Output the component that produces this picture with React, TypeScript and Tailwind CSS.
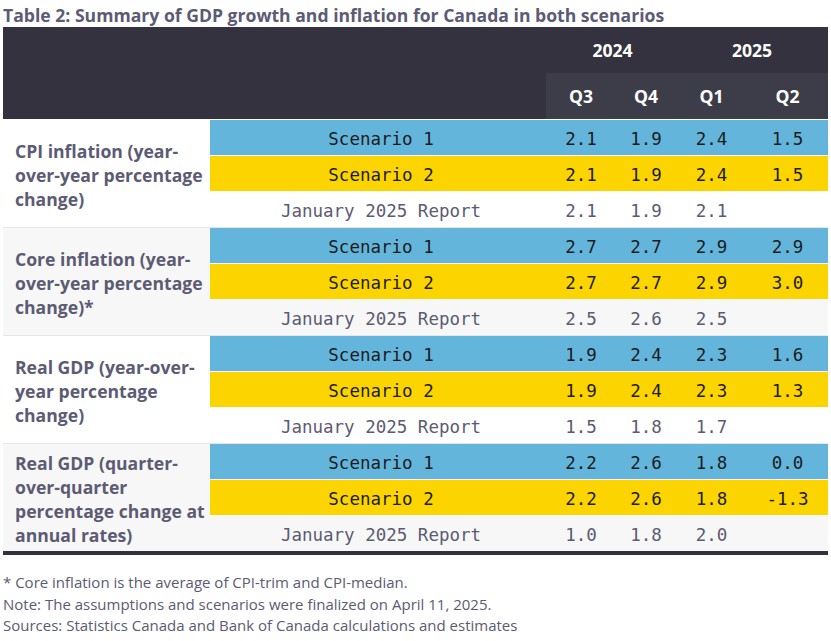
import React from "react";

type Group = {
  label: string;
  s1: string[];
  s2: string[];
  jan: string[];
  grey: boolean;
};

const groups: Group[] = [
  {
    label: "CPI inflation (year-over-year percentage change)",
    s1: ["2.1", "1.9", "2.4", "1.5"],
    s2: ["2.1", "1.9", "2.4", "1.5"],
    jan: ["2.1", "1.9", "2.1", ""],
    grey: false,
  },
  {
    label: "Core inflation (year-over-year percentage change)*",
    s1: ["2.7", "2.7", "2.9", "2.9"],
    s2: ["2.7", "2.7", "2.9", "3.0"],
    jan: ["2.5", "2.6", "2.5", ""],
    grey: true,
  },
  {
    label: "Real GDP (year-over-year percentage change)",
    s1: ["1.9", "2.4", "2.3", "1.6"],
    s2: ["1.9", "2.4", "2.3", "1.3"],
    jan: ["1.5", "1.8", "1.7", ""],
    grey: false,
  },
  {
    label: "Real GDP (quarter-over-quarter percentage change at annual rates)",
    s1: ["2.2", "2.6", "1.8", "0.0"],
    s2: ["2.2", "2.6", "1.8", "-1.3"],
    jan: ["1.0", "1.8", "2.0", ""],
    grey: true,
  },
];

const sans = "font-['Open_Sans',sans-serif]";
const mono = "font-['DejaVu_Sans_Mono',monospace]";

export default function App() {
  return (
    <div className={`w-[831px] bg-white pl-[3px] ${sans}`}>
      <div className="w-[825px]">
        <h1 className="pt-[3px] text-[17.6px] font-bold leading-[24px] text-[#5c5b73]">
          Table 2: Summary of GDP growth and inflation for Canada in both scenarios
        </h1>

        {/* Header */}
        <div className="bg-[#33323e] text-white">
          <div className="grid h-[46px] grid-cols-[543px_130px_152px] text-[17.6px] font-bold">
            <div />
            <div className="flex items-center justify-center pl-[3px]">2024</div>
            <div className="flex items-center justify-center">2025</div>
          </div>
          <div className="grid h-[46px] grid-cols-[543px_70px_60px_71px_81px] text-[17.6px] font-bold">
            <div />
            <div className="flex items-center justify-center bg-[#3d3d4a]">Q3</div>
            <div className="flex items-center justify-center bg-[#3d3d4a]">Q4</div>
            <div className="flex items-center justify-center bg-[#3d3d4a]">Q1</div>
            <div className="flex items-center justify-center bg-[#3d3d4a]">Q2</div>
          </div>
        </div>

        {/* Body */}
        <div className="border-b-[4px] border-[#33323e]">
          {groups.map((g, gi) => (
            <div
              key={gi}
              className={`flex border-t ${
                gi === 0 ? "border-white" : "border-[#e6e6e6]"
              } ${g.grey ? "bg-[#f7f7f7]" : "bg-white"}`}
            >
              <div className="flex w-[207px] items-center pl-3 pr-[2px] pt-[2px] text-[17.6px] font-bold leading-[24px] text-[#5c5b73]">
                {g.label}
              </div>
              <div className="w-[618px]">
                <div
                  className={`grid h-[35px] grid-cols-[336px_70px_60px_71px_81px] bg-[#64b5dc] pt-[3px] text-[#1c1c1c] ${mono} text-[17.5px]`}
                >
                  <div className="flex items-center justify-center pl-[6px]">Scenario 1</div>
                  {g.s1.map((v, i) => (
                    <div key={i} className="flex items-center justify-center">
                      {v}
                    </div>
                  ))}
                </div>
                <div
                  className={`grid h-[36px] grid-cols-[336px_70px_60px_71px_81px] border-t border-white bg-[#fcd400] pt-[3px] text-[#1c1c1c] ${mono} text-[17.5px]`}
                >
                  <div className="flex items-center justify-center pl-[6px]">Scenario 2</div>
                  {g.s2.map((v, i) => (
                    <div key={i} className="flex items-center justify-center">
                      {v}
                    </div>
                  ))}
                </div>
                <div
                  className={`grid h-[36px] grid-cols-[336px_70px_60px_71px_81px] border-t border-white pt-[3px] text-[#5c5b73] ${mono} text-[17.5px]`}
                >
                  <div className="flex items-center justify-center pl-[6px]">January 2025 Report</div>
                  {g.jan.map((v, i) => (
                    <div key={i} className="flex items-center justify-center">
                      {v}
                    </div>
                  ))}
                </div>
              </div>
            </div>
          ))}
        </div>

        {/* Notes */}
        <div className="mt-[17px] text-[15px] leading-[21.5px] text-[#5c5b73]">
          <p>* Core inflation is the average of CPI-trim and CPI-median.</p>
          <p>Note: The assumptions and scenarios were finalized on April 11, 2025.</p>
          <p>Sources: Statistics Canada and Bank of Canada calculations and estimates</p>
        </div>
      </div>
    </div>
  );
}
